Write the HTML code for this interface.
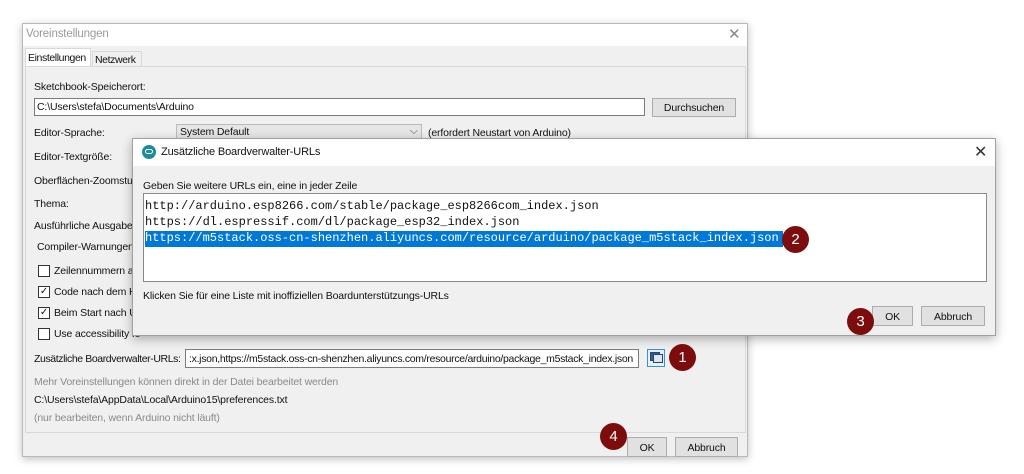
<!DOCTYPE html>
<html><head><meta charset="utf-8"><style>
*{margin:0;padding:0;box-sizing:border-box}
body{width:1024px;height:474px;background:#fff;position:relative;overflow:hidden;font-family:"Liberation Sans",Tahoma,sans-serif;font-size:10.5px;letter-spacing:-0.15px;color:#111}
.a{position:absolute;white-space:nowrap}
.win{position:absolute;left:22px;top:23px;width:726px;height:434px;background:#f0f0f0;border:1px solid #b9b9b9;box-shadow:0 2px 8px rgba(0,0,0,.25)}
.inp{position:absolute;background:#fff;border:1px solid #7a7a7a}
.btn{position:absolute;background:#e1e1e1;border:1px solid #adadad;text-align:center}
.cb{position:absolute;width:12px;height:12px;border:1px solid #333;background:#fff;font-size:10px;line-height:10px;text-align:center}
.circ{position:absolute;width:27px;height:27px;border-radius:50%;background:#7d0d0d;color:#fff;font-size:15px;line-height:27px;text-align:center;letter-spacing:0}
.mono{font-family:"Liberation Mono",monospace;font-size:12px;letter-spacing:0}
.gray{color:#8a8a8a}
</style></head><body>
<div class="win">
  <div class="a" style="left:0;top:0;width:724px;height:22px;background:#fff"></div>
  <div class="a gray" style="left:3px;top:4px;font-size:11.5px;color:#999">Voreinstellungen</div>
  <div class="a" style="left:705px;top:1px;font-size:15px;color:#888">✕</div>
  <div class="a" style="left:2px;top:24px;width:66px;height:19px;background:#fff;border:1px solid #d9d9d9;border-bottom:none"></div>
  <div class="a" style="left:5px;top:28px;letter-spacing:-0.4px">Einstellungen</div>
  <div class="a" style="left:69px;top:27px;width:50px;height:16px;border:1px solid #d9d9d9;border-bottom:none;background:#f0f0f0"></div>
  <div class="a" style="left:72px;top:30px;letter-spacing:-0.4px">Netzwerk</div>
  <div class="a" style="left:2px;top:42px;width:721px;height:367px;border:1px solid #d9d9d9;background:#f0f0f0"></div>
  <div class="a" style="left:11px;top:57px">Sketchbook-Speicherort:</div>
  <div class="inp" style="left:11px;top:74px;width:611px;height:18px"></div>
  <div class="a" style="left:14px;top:77px">C:\Users\stefa\Documents\Arduino</div>
  <div class="btn" style="left:629px;top:74px;width:84px;height:19px;padding-top:3px">Durchsuchen</div>
  <div class="a" style="left:11px;top:103px">Editor-Sprache:</div>
  <div class="a" style="left:153px;top:100px;width:246px;height:15px;background:#e6e6e6;border:1px solid #bbb"></div>
  <div class="a" style="left:157px;top:102px">System Default</div>
  <div class="a" style="left:387px;top:101px;color:#555">⌵</div>
  <div class="a" style="left:405px;top:103px">(erfordert Neustart von Arduino)</div>
  <div class="a" style="left:11px;top:127px">Editor-Textgröße:</div>
  <div class="a" style="left:11px;top:151px">Oberflächen-Zoomstufe</div>
  <div class="a" style="left:11px;top:174px">Thema:</div>
  <div class="a" style="left:11px;top:196px">Ausführliche Ausgabe w</div>
  <div class="a" style="left:14px;top:217px">Compiler-Warnungen:</div>
  <div class="cb" style="left:15px;top:241px"></div><div class="a" style="left:31px;top:241px">Zeilennummern an</div>
  <div class="cb" style="left:15px;top:262px">✓</div><div class="a" style="left:31px;top:262px">Code nach dem Ho</div>
  <div class="cb" style="left:15px;top:283px">✓</div><div class="a" style="left:31px;top:283px">Beim Start nach Up</div>
  <div class="cb" style="left:15px;top:304px"></div><div class="a" style="left:31px;top:304px">Use accessibility fe</div>
  <div class="a" style="left:11px;top:329px;letter-spacing:-0.4px">Zusätzliche Boardverwalter-URLs:</div>
  <div class="inp" style="left:162px;top:325px;width:454px;height:19px;overflow:hidden">
    <div class="a" style="left:3px;top:3px;letter-spacing:-0.3px">:x.json,https://m5stack.oss-cn-shenzhen.aliyuncs.com/resource/arduino/package_m5stack_index.json</div>
  </div>
  <div class="a" style="left:624px;top:325px;width:18px;height:18px;border:1px solid #3b8ee0;background:#e5f1fb"></div>
  <div class="a" style="left:627px;top:328px;width:10px;height:9px;background:#3a5c86;border:1px solid #23466f"></div>
  <div class="a" style="left:630px;top:330px;width:10px;height:9px;background:#dde6f0;border:1px solid #23466f"></div>
  <div class="a gray" style="left:11px;top:352px">Mehr Voreinstellungen können direkt in der Datei bearbeitet werden</div>
  <div class="a" style="left:11px;top:370px">C:\Users\stefa\AppData\Local\Arduino15\preferences.txt</div>
  <div class="a gray" style="left:11px;top:388px">(nur bearbeiten, wenn Arduino nicht läuft)</div>
  <div class="btn" style="left:604px;top:413px;width:40px;height:20px;padding-top:4px">OK</div>
  <div class="btn" style="left:652px;top:413px;width:63px;height:20px;padding-top:4px">Abbruch</div>
</div>

<div class="a" style="left:132px;top:138px;width:864px;height:198px;background:#f0f0f0;border:1px solid #a0a0a0;box-shadow:0 3px 10px rgba(0,0,0,.3)">
  <div class="a" style="left:0;top:0;width:862px;height:27px;background:#fff"></div>
  <div class="a" style="left:9px;top:6px;width:14px;height:14px;border-radius:50%;background:#1f8a9a"></div>
  <div class="a" style="left:12px;top:10px;width:8px;height:5px;border:1.5px solid #fff;border-radius:3px"></div>
  <div class="a" style="left:28px;top:7px;font-size:11px">Zusätzliche Boardverwalter-URLs</div>
  <div class="a" style="left:841px;top:3px;font-size:16px;color:#333">✕</div>
  <div class="a" style="left:10px;top:41px">Geben Sie weitere URLs ein, eine in jeder Zeile</div>
  <div class="a" style="left:10px;top:54px;width:844px;height:89px;background:#fff;border:1px solid #8a8a8a"></div>
  <div class="a mono" style="left:12px;top:60px">http://arduino.esp8266.com/stable/package_esp8266com_index.json</div>
  <div class="a mono" style="left:12px;top:76px">https://dl.espressif.com/dl/package_esp32_index.json</div>
  <div class="a" style="left:12px;top:92px;width:638px;height:16px;background:#0078d7"></div>
  <div class="a mono" style="left:12px;top:92px;color:#fff">https://m5stack.oss-cn-shenzhen.aliyuncs.com/resource/arduino/package_m5stack_index.json</div>
  <div class="a" style="left:10px;top:151px">Klicken Sie für eine Liste mit inoffiziellen Boardunterstützungs-URLs</div>
  <div class="btn" style="left:739px;top:167px;width:41px;height:20px;padding-top:4px">OK</div>
  <div class="btn" style="left:788px;top:167px;width:64px;height:20px;padding-top:4px">Abbruch</div>
</div>

<div class="circ" style="left:782px;top:226px">2</div>
<div class="circ" style="left:847px;top:308px">3</div>
<div class="circ" style="left:669px;top:344px">1</div>
<div class="circ" style="left:600px;top:423px">4</div>
</body></html>
